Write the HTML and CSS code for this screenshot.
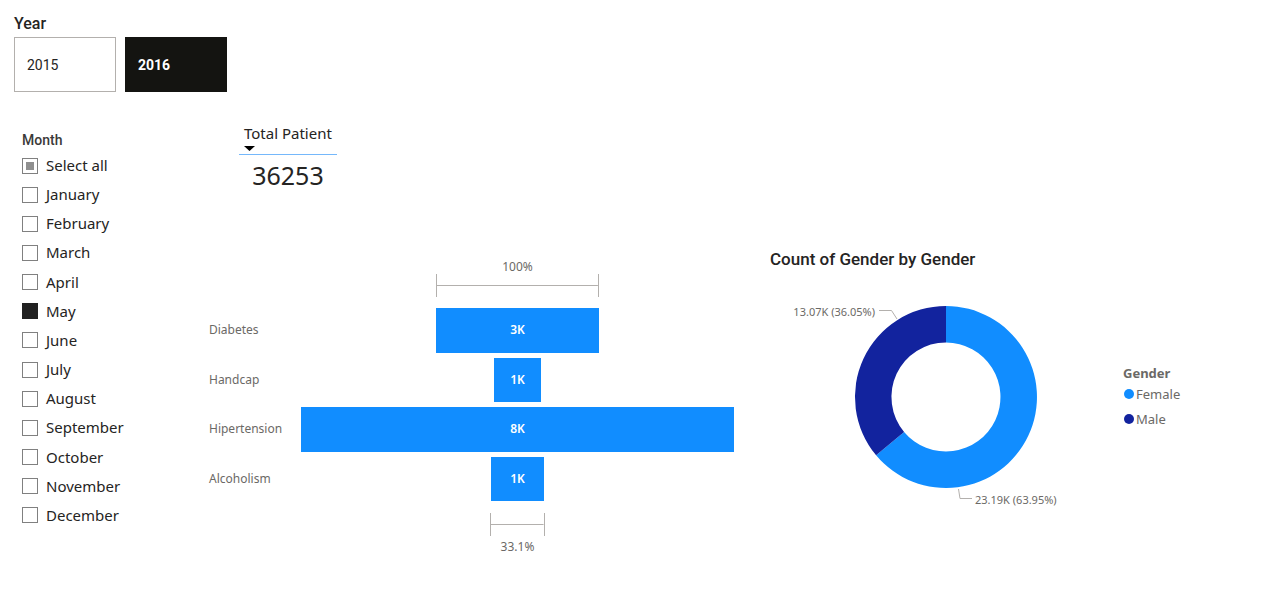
FILE: index.html
```html
<!DOCTYPE html>
<html lang="en">
<head>
<meta charset="utf-8">
<title>Patient report</title>
<link rel="stylesheet" href="styles.css">
</head>
<body>
<section class="year" aria-labelledby="year-title">
  <h2 class="year-title" id="year-title">Year</h2>
  <div class="year-tiles">
    <button class="tile" type="button" aria-pressed="false">2015</button>
    <button class="tile tile-on" type="button" aria-pressed="true">2016</button>
  </div>
</section>
<main class="report">
  <section class="month" aria-labelledby="month-title">
    <h2 class="month-title" id="month-title">Month</h2>
    <ul class="month-list">
      <li><label class="option"><input class="box box-mixed" type="checkbox" aria-checked="mixed">Select all</label></li>
      <li><label class="option"><input class="box" type="checkbox">January</label></li>
      <li><label class="option"><input class="box" type="checkbox">February</label></li>
      <li><label class="option"><input class="box" type="checkbox">March</label></li>
      <li><label class="option"><input class="box" type="checkbox">April</label></li>
      <li><label class="option"><input class="box" type="checkbox" checked>May</label></li>
      <li><label class="option"><input class="box" type="checkbox">June</label></li>
      <li><label class="option"><input class="box" type="checkbox">July</label></li>
      <li><label class="option"><input class="box" type="checkbox">August</label></li>
      <li><label class="option"><input class="box" type="checkbox">September</label></li>
      <li><label class="option"><input class="box" type="checkbox">October</label></li>
      <li><label class="option"><input class="box" type="checkbox">November</label></li>
      <li><label class="option"><input class="box" type="checkbox">December</label></li>
    </ul>
  </section>
  <div class="center">
    <table class="total">
      <thead><tr><th scope="col">Total Patient<svg class="sort" width="11" height="5" viewBox="0 0 11 5" aria-hidden="true"><path d="M0 0h11L5.500 5z"/></svg></th></tr></thead>
      <tbody><tr><td>36253</td></tr></tbody>
    </table>
    <section class="funnel" aria-label="Conditions funnel">
      <div class="rate rate-top">
        <span>100%</span>
        <div class="bracket" style="width:37.6%"></div>
      </div>
      <div class="bars">
        <span class="category">Diabetes</span><div class="bar" style="width:37.6%">3K</div>
        <span class="category">Handcap</span><div class="bar" style="width:11%">1K</div>
        <span class="category">Hipertension</span><div class="bar" style="width:100%">8K</div>
        <span class="category">Alcoholism</span><div class="bar" style="width:12.4%">1K</div>
      </div>
      <div class="rate rate-bottom">
        <div class="bracket" style="width:12.5%"></div>
        <span>33.1%</span>
      </div>
    </section>
  </div>
  <section class="gender" aria-labelledby="gender-title">
    <h2 class="gender-title" id="gender-title">Count of Gender by Gender</h2>
    <div class="gender-body">
      <svg class="donut" viewBox="0 0 330 220" role="img" aria-label="Female 63.95%, Male 36.05%">
        <path fill="#118dff" d="M176 16A91 91 0 1 1 106.1 165.3L134.1 141.9A54.5 54.5 0 1 0 176 52.5Z"/>
        <path fill="#12239e" d="M106.1 165.3A91 91 0 0 1 176 16V52.5A54.5 54.5 0 0 0 134.1 141.9Z"/>
        <path class="leader" d="M109 20.5H121.500L127 29M188.500 199L190 208.500H202"/>
        <text class="value" x="105" y="26" text-anchor="end">13.07K (36.05%)</text>
        <text class="value" x="205" y="214">23.19K (63.95%)</text>
      </svg>
      <div class="legend">
        <h3 class="legend-title">Gender</h3>
        <ul class="legend-list">
          <li><span class="dot dot-female"></span>Female</li>
          <li><span class="dot dot-male"></span>Male</li>
        </ul>
      </div>
    </div>
  </section>
</main>
</body>
</html>
```
FILE: styles.css
```css
* { box-sizing: border-box; }
body {
  margin: 0;
  padding: 12px 14px;
  background: #fff;
  color: #252423;
  font-family: "Noto Sans", "Open Sans", sans-serif;
}
h2, h3, ul { margin: 0; padding: 0; }
ul { list-style: none; }
h2 { font-family: Roboto, sans-serif; font-weight: 500; }

.year-title { font-size: 16px; line-height: 24px; }
.year-tiles { display: flex; gap: 9px; margin-top: 1px; }
.tile {
  width: 102px;
  height: 55px;
  padding: 0 12px;
  border: 1px solid #b3b0ad;
  background: #fff;
  color: #252423;
  font: 400 14px Roboto, sans-serif;
  text-align: left;
}
.tile-on { background: #141411; border-color: #141411; color: #fff; font-weight: 700; }

.report {
  display: grid;
  grid-template-columns: 195px minmax(0, 525fr) minmax(0, 516fr);
  margin-top: 32px;
}

.month { padding: 6px 8px 0; }
.month-title { color: #3b3a39; font-size: 14px; line-height: 20px; }
.month-list {
  display: grid;
  grid-template-rows: repeat(13, 1fr);
  height: 379px;
  margin-top: 1px;
}
.option { display: flex; align-items: center; gap: 8px; font-size: 15px; line-height: 29px; }
.box {
  appearance: none;
  width: 16px;
  height: 16px;
  margin: 0;
  border: 1px solid #808080;
  background: #fff;
}
.box:checked { background: #212121; border-color: #212121; }
.box-mixed { background: #8f8f8f; box-shadow: inset 0 0 0 3px #fff; }

.center { display: flex; flex-direction: column; }
.total { align-self: flex-start; margin-left: 30px; border-collapse: collapse; }
.total th {
  padding: 0 5px 3px;
  border-bottom: 1px solid #75b8fb;
  font-size: 15px;
  font-weight: 400;
  line-height: 18px;
  text-align: left;
}
.sort { display: block; margin-top: 4px; }
.total td { padding: 0; font-size: 25px; line-height: 40px; text-align: center; }

.funnel { margin-top: 65px; color: #6b6966; font-size: 12px; line-height: 14px; }
.rate { display: flex; flex-direction: column; align-items: center; margin-left: 92px; }
.rate-bottom { gap: 4px; margin-top: 12px; }
.bracket {
  height: 23px;
  border: solid #b3b0ad;
  border-width: 0 1px;
  background: linear-gradient(#b3b0ad, #b3b0ad) center / 100% 1px no-repeat;
}
.bars {
  display: grid;
  grid-template-columns: 92px minmax(0, 1fr);
  grid-template-rows: repeat(4, 1fr);
  row-gap: 5px;
  align-items: center;
  height: 193px;
  margin-top: 11px;
}
.bar {
  display: flex;
  align-items: center;
  justify-content: center;
  justify-self: center;
  height: 100%;
  background: #118dff;
  color: #fff;
  font-weight: 600;
}

.gender { padding: 124px 0 0 36px; }
.gender-title { font-size: 17px; line-height: 22px; }
.gender-body { display: flex; gap: 23px; margin-top: 20px; }
.donut { flex: 0 1 330px; min-width: 0; }
.leader { fill: none; stroke: #b3b0ad; stroke-width: 1; }
.value { fill: #6b6966; font-size: 11px; }
.legend { padding-top: 74px; color: #6b6966; font-size: 13px; line-height: 18px; }
.legend-title { font-size: 13px; font-weight: 700; }
.legend-list { display: grid; row-gap: 7px; margin-top: 3px; }
.legend-list li { display: flex; align-items: center; gap: 2px; }
.dot { width: 10px; height: 10px; margin-left: 1px; border-radius: 50%; }
.dot-female { background: #118dff; }
.dot-male { background: #12239e; }
```
